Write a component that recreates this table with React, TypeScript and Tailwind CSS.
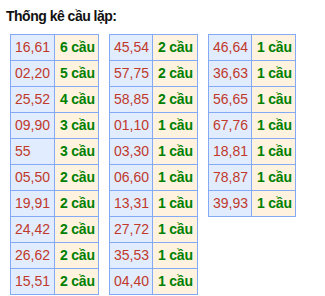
const tables: { w: [number, number]; rows: [string, number][] }[] = [
  {
    w: [44, 44],
    rows: [
      ['16,61', 6],
      ['02,20', 5],
      ['25,52', 4],
      ['09,90', 3],
      ['55', 3],
      ['05,50', 2],
      ['19,91', 2],
      ['24,42', 2],
      ['26,62', 2],
      ['15,51', 2],
    ],
  },
  {
    w: [43, 45],
    rows: [
      ['45,54', 2],
      ['57,75', 2],
      ['58,85', 2],
      ['01,10', 1],
      ['03,30', 1],
      ['06,60', 1],
      ['13,31', 1],
      ['27,72', 1],
      ['35,53', 1],
      ['04,40', 1],
    ],
  },
  {
    w: [43, 44],
    rows: [
      ['46,64', 1],
      ['36,63', 1],
      ['56,65', 1],
      ['67,76', 1],
      ['18,81', 1],
      ['78,87', 1],
      ['39,93', 1],
    ],
  },
];

export default function App() {
  return (
    <div className="w-[325px] h-[296px] bg-white overflow-hidden font-['Liberation_Sans',Arial,sans-serif]">
      <div className="pt-[8px] pl-[6px] text-[14px] leading-[16px] tracking-[-0.5px] font-bold text-[#111]">
        Thống kê cầu lặp:
      </div>
      <div className="flex items-start gap-[10px] mt-[10px] ml-[10px]">
        {tables.map((t, i) => (
          <div key={i} className="flex flex-col border-l border-t border-[#84aaf6]">
            {t.rows.map(([pair, n]) => (
              <div key={pair} className="flex h-[26px] text-[14px]">
                <div
                  className="flex items-center pl-[4px] bg-[#e1ecfe] text-[#c0392b] border-r border-b border-[#84aaf6]"
                  style={{ width: t.w[0] }}
                >
                  {pair}
                </div>
                <div
                  className="flex items-center pl-[5px] bg-[#fff3e0] text-[#008000] font-bold tracking-[-0.2px] border-r border-b border-[#84aaf6]"
                  style={{ width: t.w[1] }}
                >
                  {n} cầu
                </div>
              </div>
            ))}
          </div>
        ))}
      </div>
    </div>
  );
}
